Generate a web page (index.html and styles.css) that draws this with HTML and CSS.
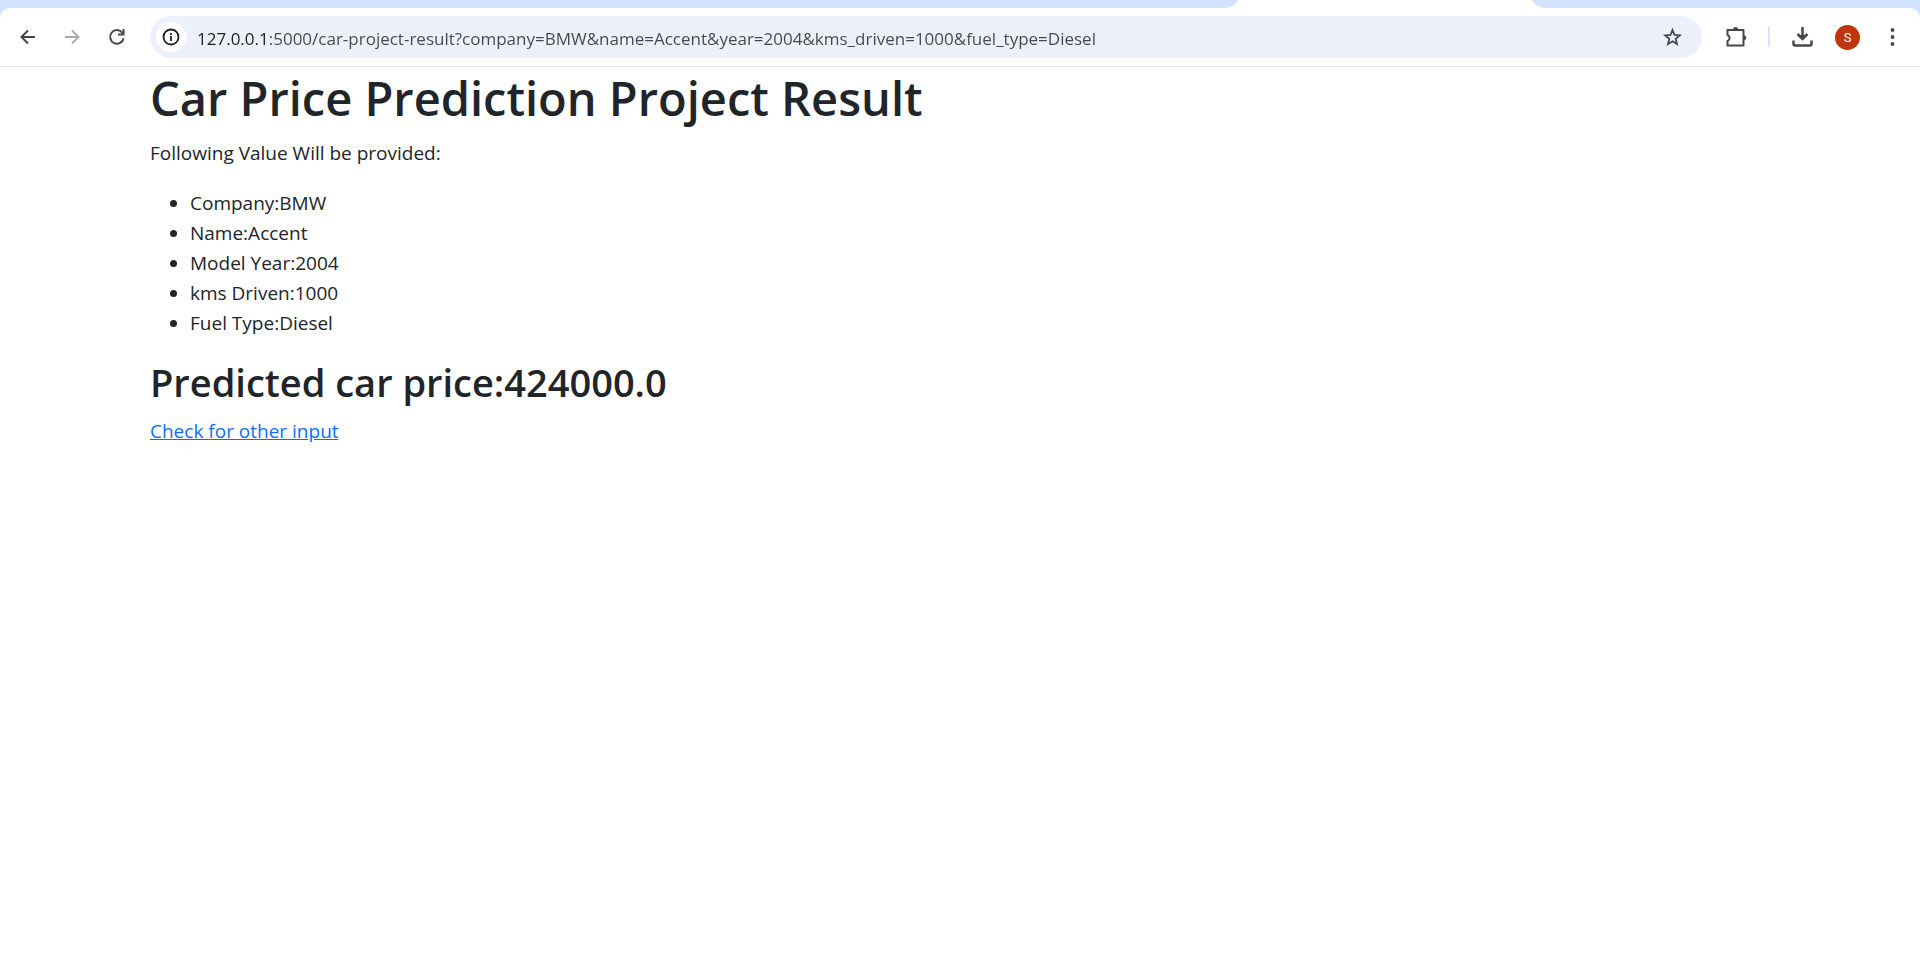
FILE: index.html
```html
<!DOCTYPE html>
<html lang="en">
<head>
<meta charset="utf-8">
<title>Car Price Prediction Project Result</title>
<link rel="stylesheet" href="styles.css">
</head>
<body>
<header class="browser">
  <div class="tabstrip">
    <div class="tabs-before"></div>
    <div class="tab-active"></div>
    <div class="tabs-after"></div>
  </div>
  <div class="toolbar">
    <div class="nav">
      <button class="icon-btn" type="button" aria-label="Back">
        <svg viewBox="0 0 20 20" width="20" height="20"><path d="M18 10H4.500M11 3.500L4.500 10l6.500 6.500" fill="none" stroke="#474747" stroke-width="2"/></svg>
      </button>
      <button class="icon-btn" type="button" aria-label="Forward" disabled>
        <svg viewBox="0 0 20 20" width="20" height="20"><path d="M3 10h13.500M10 3.500l6.500 6.500-6.500 6.500" fill="none" stroke="#ababab" stroke-width="2"/></svg>
      </button>
      <button class="icon-btn" type="button" aria-label="Reload">
        <svg viewBox="0 0 20 20" width="20" height="20"><path d="M16.600 11.200A6.800 6.800 0 1 1 15.200 5.600L16.600 7.200" fill="none" stroke="#474747" stroke-width="2"/><path d="M17.500 2v6.500H11v-2h4.500V2z" fill="#474747"/></svg>
      </button>
    </div>
    <div class="omnibox">
      <button class="site-info" type="button" aria-label="View site information">
        <svg viewBox="0 0 18 18" width="18" height="18"><circle cx="9" cy="9" r="7.500" fill="none" stroke="#1f1f1f" stroke-width="1.800"/><path d="M9 8v5M9 5v2" stroke="#1f1f1f" stroke-width="1.800"/></svg>
      </button>
      <input class="url" type="text" aria-label="Address" spellcheck="false" value="127.0.0.1:5000/car-project-result?company=BMW&amp;name=Accent&amp;year=2004&amp;kms_driven=1000&amp;fuel_type=Diesel">
      <button class="icon-btn" type="button" aria-label="Bookmark this tab">
        <svg viewBox="0 0 20 20" width="20" height="20"><path d="M10.500 3l2 5 5.300.4-4.100 3.500 1.300 5.200-4.500-2.800L6 17.100l1.300-5.200-4.100-3.500L8.500 8z" fill="none" stroke="#474747" stroke-width="1.800"/></svg>
      </button>
    </div>
    <div class="actions">
      <button class="icon-btn" type="button" aria-label="Extensions">
        <svg viewBox="0 0 22 22" width="22" height="22"><path d="M2.500 4h16v15.500h-16v-4.500a3.200 3.200 0 0 0 0-6z" fill="none" stroke="#474747" stroke-width="2" stroke-linejoin="round"/><path d="M8.500 3.500a2.100 2.100 0 0 1 4.200 0zM18.800 9.700a2.100 2.100 0 0 1 0 4.200z" fill="#474747" stroke="#474747"/></svg>
      </button>
      <span class="divider"></span>
      <button class="icon-btn" type="button" aria-label="Downloads">
        <svg viewBox="0 0 22 22" width="22" height="22"><path d="M10.500 1v12M5.500 8l5 5 5-5M1.500 14.500v3.500a1.500 1.500 0 0 0 1.500 1.500h15a1.500 1.500 0 0 0 1.500-1.500v-3.500" fill="none" stroke="#474747" stroke-width="2.500"/><path d="M6.500 9h8l-4 4z" fill="#474747"/></svg>
      </button>
      <button class="avatar" type="button" aria-label="Profile">S</button>
      <button class="icon-btn" type="button" aria-label="Menu">
        <svg viewBox="0 0 20 20" width="20" height="20" fill="#474747"><circle cx="10.500" cy="3" r="1.900"/><circle cx="10.500" cy="10" r="1.900"/><circle cx="10.500" cy="17" r="1.900"/></svg>
      </button>
    </div>
  </div>
</header>
<main class="container">
  <h1>Car Price Prediction Project Result</h1>
  <p>Following Value Will be provided:</p>
  <ul>
    <li>Company:BMW</li>
    <li>Name:Accent</li>
    <li>Model Year:2004</li>
    <li>kms Driven:1000</li>
    <li>Fuel Type:Diesel</li>
  </ul>
  <h2>Predicted car price:424000.0</h2>
  <a href="/car-project">Check for other input</a>
</main>
</body>
</html>
```

FILE: styles.css
```css
* { box-sizing: border-box; }

body {
  margin: 0;
  background: #fff;
  color: #212529;
  font: 400 19px/30px "Open Sans", "Noto Sans", sans-serif;
}

button {
  padding: 0;
  border: 0;
  background: none;
  cursor: pointer;
}

svg { display: block; }

.browser { background: #d3e3fd; }

.tabstrip {
  display: flex;
  height: 8px;
  overflow: hidden;
  background: #fff;
}

.tabs-before,
.tabs-after {
  height: 24px;
  margin-top: -16px;
  background: #d3e3fd;
}

.tabs-before { flex: 1; border-bottom-right-radius: 15px; }
.tab-active { width: 290px; }
.tabs-after { width: 390px; border-bottom-left-radius: 15px; }

.toolbar {
  display: flex;
  align-items: center;
  height: 59px;
  padding: 0 18px 0 17px;
  border-bottom: 1px solid #dedede;
  border-radius: 10px 10px 0 0;
  background: #fff;
}

.nav {
  display: flex;
  gap: 25px;
  margin-right: 23px;
}

.icon-btn {
  display: flex;
  flex: none;
}

.omnibox {
  display: flex;
  flex: 1;
  align-items: center;
  height: 42px;
  padding: 0 20px 0 6px;
  border-radius: 21px;
  background: #ebf0fa;
}

.site-info {
  display: grid;
  place-items: center;
  width: 30px;
  height: 30px;
  margin-right: 11px;
  border-radius: 50%;
  background: #fff;
}

/* The host is darker than the rest of the address. */
.url {
  flex: 1;
  min-width: 0;
  height: 32px;
  padding: 2px 0 0;
  border: 0;
  outline: 0;
  color: transparent;
  background: linear-gradient(90deg, #1f1f1f 71px, #474747 71px);
  background-clip: text;
  -webkit-background-clip: text;
  font: 400 17px/30px "Open Sans", "Noto Sans", sans-serif;
}

.actions {
  display: flex;
  align-items: center;
  margin-left: 23px;
}

.divider {
  width: 2px;
  height: 20px;
  margin: 0 22px 0 21px;
  background: #d3e3fd;
}

.avatar {
  width: 25px;
  height: 25px;
  margin: 0 22px 0 21px;
  border-radius: 50%;
  background: #bf360c;
  color: #fff;
  font: 400 13px/25px Roboto, sans-serif;
}

.container {
  max-width: 1650px;
  margin: 0 auto;
  padding: 1px 15px;
}

h1, h2 {
  margin: 0 0 10px;
  font-weight: 600;
}

h1 { font-size: 47px; line-height: 60px; }
h2 { font-size: 38px; line-height: 48px; }

p { margin: 0 0 20px; }

ul {
  margin: 0 0 20px;
  padding-left: 40px;
}

a { color: #0d6efd; }
```
